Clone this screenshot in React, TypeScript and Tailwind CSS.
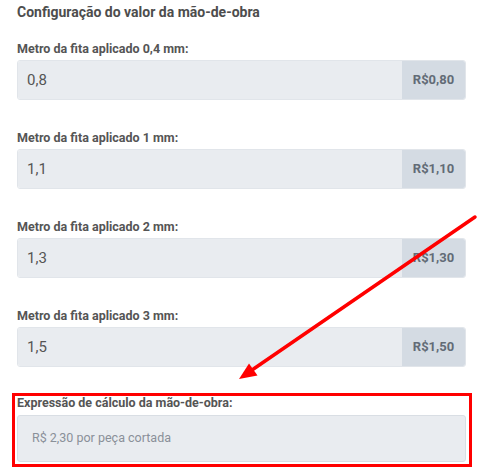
import React from "react";

const fields = [
  { label: "Metro da fita aplicado 0,4 mm:", value: "0,8", price: "R$0,80" },
  { label: "Metro da fita aplicado 1 mm:", value: "1,1", price: "R$1,10" },
  { label: "Metro da fita aplicado 2 mm:", value: "1,3", price: "R$1,30" },
  { label: "Metro da fita aplicado 3 mm:", value: "1,5", price: "R$1,50" },
];

export default function App() {
  return (
    <div
      className="relative w-[487px] h-[473px] bg-white overflow-hidden"
      style={{ fontFamily: "Roboto, 'Liberation Sans', sans-serif" }}
    >
      <div className="pl-[17px] pt-[2px]">
        <h2 className="text-[14px] leading-[20px] font-bold text-[#4d4d4d]">
          Configuração do valor da mão-de-obra
        </h2>
        <div className="mt-[19px] flex flex-col gap-[30px]">
          {fields.map((f) => (
            <div key={f.label} className="flex flex-col gap-[3px]">
              <label className="text-[12.5px] leading-[16px] font-bold text-[#555]">{f.label}</label>
              <div className="flex h-[40px] w-[449px] rounded-[3px] border border-[#e1e5ea] overflow-hidden">
                <div className="flex-1 bg-[#e9ecf0] flex items-center pl-[9px] text-[15px] text-[#555]">
                  {f.value}
                </div>
                <div className="w-[63px] bg-[#d4dbe3] flex items-center justify-center text-[13px] font-bold text-[#626b76]">
                  {f.price}
                </div>
              </div>
            </div>
          ))}
        </div>
      </div>
      <div className="ml-[12px] mt-[26px] w-[460px] border-[3px] border-[#ff0000] pl-[2px] pr-[3px] pb-[2px] flex flex-col gap-[4px]">
        <label className="text-[12.5px] leading-[16px] font-bold text-[#555] -mt-[1px]">
          Expressão de cálculo da mão-de-obra:
        </label>
        <div className="h-[47px] w-[449px] rounded-[3px] border border-[#d9dee4] bg-[#e9ecf0] flex items-center pl-[14px] text-[12.5px] text-[#8a9099]">
          R$ 2,30 por peça cortada
        </div>
      </div>
      <svg className="absolute left-0 top-0 pointer-events-none" width="487" height="473">
        <line x1="475" y1="217" x2="252" y2="370" stroke="#ff0000" strokeWidth="3.5" strokeLinecap="round" />
        <polygon points="239,379 249,363.6 257.5,375.5" fill="#ff0000" />
      </svg>
    </div>
  );
}
